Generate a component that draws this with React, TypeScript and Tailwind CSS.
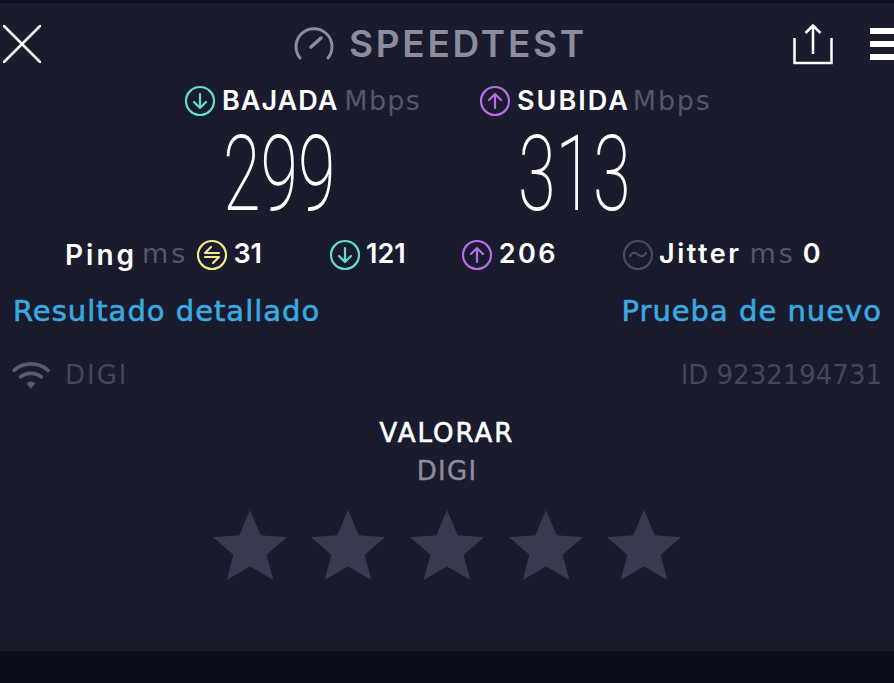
function CircleIcon({ color, children }: { color: string; children: React.ReactNode }) {
  return (
    <svg width="32" height="32" viewBox="0 0 32 32" fill="none" stroke={color} strokeLinecap="round" strokeLinejoin="round" className="shrink-0">
      <circle cx="16" cy="16" r="14" strokeWidth="2.200" />
      {children}
    </svg>
  );
}

function DownIcon() {
  return (
    <CircleIcon color="#5fe0cf">
      <path d="M16 9v14M10 17l6 6 6-6" strokeWidth="2.200" />
    </CircleIcon>
  );
}

function UpIcon() {
  return (
    <CircleIcon color="#b76ee8">
      <path d="M16 23V9M10 15l6-6 6 6" strokeWidth="2.200" />
    </CircleIcon>
  );
}

function PingIcon() {
  return (
    <CircleIcon color="#f2e88b">
      <path d="M23 14H9l6-6M9 18h14l-6 6" strokeWidth="2.200" />
    </CircleIcon>
  );
}

function JitterIcon() {
  return (
    <CircleIcon color="#4a4d60">
      <path d="M8 17c2-4 5-4 8-1.500s6 2.500 8-1.500" strokeWidth="2.200" />
    </CircleIcon>
  );
}

function Star() {
  return (
    <svg width="76" height="74" viewBox="0 0 78 74" className="shrink-0">
      <path d="M39 0l11 26 27 2-21 18 7 26-24-14-24 14 7-26L1 28l27-2z" fill="#383a50" />
    </svg>
  );
}

export default function App() {
  return (
    <div className="flex h-[683px] w-[894px] flex-col overflow-hidden bg-[#0a0c1a] pt-[3px] font-['DejaVu_Sans',sans-serif]">
      <main className="flex h-[648px] flex-col bg-[#1a1b2d]">
        {/* Header */}
        <header className="relative flex h-[76px] items-center justify-between pl-[3px] pt-[6px]">
          <svg width="38" height="38" viewBox="0 0 38 38" stroke="#fff" strokeWidth="2.500" strokeLinecap="round">
            <path d="M1 1l36 36M37 1L1 37" />
          </svg>
          <div className="absolute left-[294px] top-[20px] flex items-center gap-[14px]">
            <svg width="41" height="36" viewBox="0 0 41 36" fill="none" stroke="#8b8d9e" strokeWidth="3" strokeLinecap="round">
              <path d="M6 33A18 18 0 1 1 34 33" />
              <path d="M17 22l10-9" strokeWidth="3.500" />
            </svg>
            <span className="mt-[2px] font-['Inter',sans-serif] text-[37px] font-semibold leading-none tracking-[2.700px] text-[#8b8d9e]">SPEEDTEST</span>
          </div>
          <div className="flex items-center gap-[37px]">
            <svg width="40" height="42" viewBox="0 0 40 42" fill="none" stroke="#fff" strokeWidth="2.500">
              <path d="M1.500 15v25h37V15M20 31V3M12.500 10l7.500-7.500 7.500 7.500" />
            </svg>
            <div className="flex w-[24px] flex-col gap-[7px]">
              <div className="h-[6px] bg-white" />
              <div className="h-[6px] bg-white" />
              <div className="h-[6px] bg-white" />
            </div>
          </div>
        </header>

        {/* Speeds */}
        <section className="mt-[2px] flex pl-[184px]">
          <div className="flex w-[295px] flex-col">
            <div className="flex items-center gap-[6px]">
              <DownIcon />
              <span className="font-['Inter',sans-serif] text-[27px] font-semibold tracking-[1px] text-white">BAJADA</span>
              <span className="text-[27px] tracking-[1.300px] text-[#55576a]">Mbps</span>
            </div>
            <div className="ml-[39px] mt-[9px] h-[88px] origin-left scale-x-[0.65] font-['Roboto',sans-serif] text-[105px] font-extralight leading-[88px] text-white">299</div>
          </div>
          <div className="flex flex-col">
            <div className="flex items-center gap-[6px]">
              <UpIcon />
              <span className="font-['Inter',sans-serif] text-[27px] font-semibold tracking-[2px] text-white">SUBIDA</span>
              <span className="-ml-[3px] text-[27px] tracking-[1.800px] text-[#55576a]">Mbps</span>
            </div>
            <div className="ml-[39px] mt-[9px] h-[88px] origin-left scale-x-[0.65] font-['Roboto',sans-serif] text-[105px] font-extralight leading-[88px] text-white">313</div>
          </div>
        </section>

        {/* Ping row */}
        <section className="mt-[20px] flex h-[32px] items-center pl-[65px] font-['Inter',sans-serif] text-[27px] font-semibold text-white">
          <span className="text-[28px] tracking-[3px]">Ping</span>
          <span className="ml-[5px] font-['DejaVu_Sans',sans-serif] font-normal tracking-[3px] text-[#55576a]">ms</span>
          <span className="ml-[8px] flex items-center gap-[5px]"><PingIcon />31</span>
          <span className="ml-[67px] flex items-center gap-[5px]"><DownIcon />121</span>
          <span className="ml-[55px] flex items-center gap-[6px]"><UpIcon /><span className="tracking-[2.500px]">206</span></span>
          <span className="ml-[64px] flex items-center gap-[5px]"><JitterIcon /><span className="tracking-[2.500px]">Jitter</span></span>
          <span className="ml-[8px] font-['DejaVu_Sans',sans-serif] font-normal tracking-[3px] text-[#55576a]">ms</span>
          <span className="ml-[7px]">0</span>
        </section>

        {/* Links */}
        <section className="mt-[19px] flex items-center justify-between pl-[13px] pr-[12px] text-[29px] tracking-[1px] text-[#3aa9e0] [-webkit-text-stroke:0.600px_#3aa9e0]">
          <span>Resultado detallado</span>
          <span>Prueba de nuevo</span>
        </section>

        {/* Network */}
        <section className="mt-[23px] flex items-center justify-between pl-[12px] pr-[12px] text-[26px] text-[#45475a]">
          <span className="flex items-center gap-[15px]">
            <svg width="38" height="30" viewBox="0 0 40 32" fill="none" stroke="#5a5c6e" strokeWidth="4" strokeLinecap="round" className="-translate-y-px">
              <path d="M2 11c10-9 26-9 36 0M9 18c6-5 16-5 22 0" />
              <path d="M16 25c2-2 6-2 8 0l-4 5z" fill="#5a5c6e" strokeWidth="1" />
            </svg>
            <span className="tracking-[2px]">DIGI</span>
          </span>
          <span>ID 9232194731</span>
        </section>

        {/* Rating */}
        <section className="mt-[23px] flex flex-col items-center">
          <span className="text-[26px] leading-[30px] tracking-[2px] text-white [-webkit-text-stroke:0.600px_#ffffff]">VALORAR</span>
          <span className="mt-[8px] text-[26px] leading-[30px] tracking-[1.300px] text-[#8b8d9e] [-webkit-text-stroke:0.400px_#8b8d9e]">DIGI</span>
          <div className="mt-[23px] flex gap-[22.600px]">
            <Star />
            <Star />
            <Star />
            <Star />
            <Star />
          </div>
        </section>
      </main>
    </div>
  );
}
